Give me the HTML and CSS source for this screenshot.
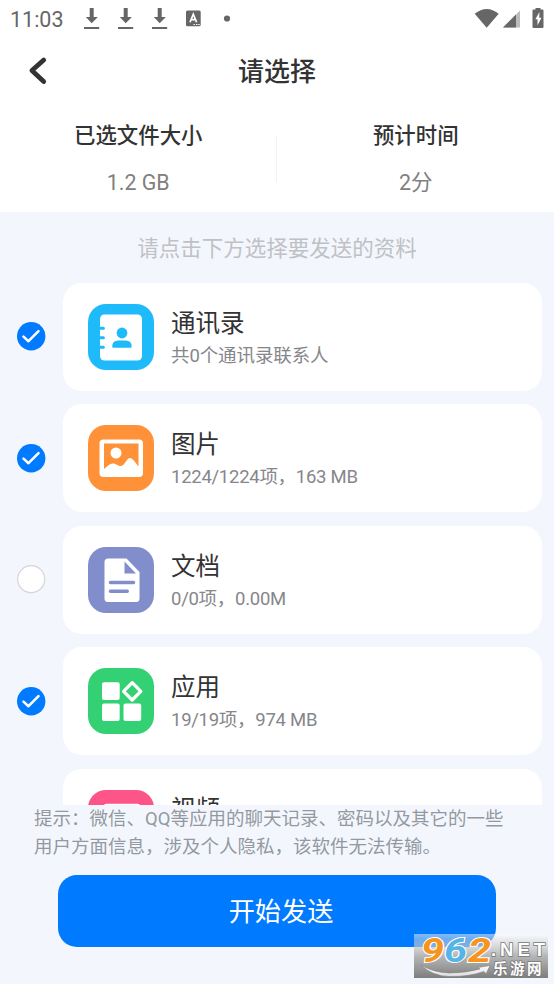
FILE: index.html
```html
<!DOCTYPE html>
<html lang="zh-CN">
<head>
<meta charset="utf-8">
<meta name="viewport" content="width=device-width, initial-scale=1">
<title>请选择</title>
<link rel="stylesheet" href="styles.css">
</head>
<body>
<div class="screen">
  <div class="status">
    <span class="clock">11:03</span>
    <svg class="status-left" width="160" height="38" viewBox="80 0 160 38" fill="#666">
      <g id="dl"><path d="M89.700 8h4v9h4.200L91.700 23.200 85.800 17h3.900z"/><path d="M84 27h15.200v2H84z"/></g>
      <use href="#dl" x="34"/><use href="#dl" x="68"/>
      <rect x="186" y="10.500" width="14.700" height="15.800" rx="1.500"/>
      <path d="M190 22.300l3.300-8 3.300 8M191.300 19.700h4" fill="none" stroke="#fff" stroke-width="1.700"/>
      <path d="M193.500 24h1.400v1h-1.400zM196 24h1.400v1H196zM198.300 24h1.400v1h-1.400z" fill="#fff"/>
      <circle cx="227" cy="18.500" r="3.100"/>
    </svg>
    <svg class="status-right" width="80" height="38" viewBox="474 0 80 38" fill="#666">
      <path d="M474.700 13.700Q486.700 4.200 498.700 13.700L486.700 27.700z"/>
      <path d="M503 27.600L520 10.500v17.100z" fill="#bbb"/><path d="M503 27.600L516 14.500v13.100z"/>
      <path d="M533.500 9.500h2V8h5v1.500h2q1 0 1 1V27q0 1-1 1h-9q-1 0-1-1V10.500q0-1 1-1z"/>
      <path d="M539.500 12l-4.200 7.200h2.200v6l4-7.500h-2.300z" fill="#fff"/>
    </svg>
  </div>
  <header class="header">
    <svg class="back" width="24" height="32" viewBox="0 0 24 32"><path d="M19.700 5L7.900 15.500 19.700 26.500" fill="none" stroke="#333" stroke-width="4.800" stroke-linecap="round" stroke-linejoin="round"/></svg>
    <h1>请选择</h1>
  </header>
  <section class="summary">
    <div class="stat"><b>已选文件大小</b><span>1.2 GB</span></div>
    <i class="divider"></i>
    <div class="stat"><b>预计时间</b><span>2分</span></div>
  </section>
  <main class="panel">
    <p class="hint">请点击下方选择要发送的资料</p>
    <div class="list">
      <div class="row">
        <svg class="check" viewBox="0 0 29 29"><circle cx="14.200" cy="14.200" r="14.200" fill="#007aff"/><path d="M6.500 14.600l5 4.600 10-10" class="tick"/></svg>
        <div class="card">
          <svg class="icon" viewBox="0 0 66 66"><rect width="66" height="66" rx="18" fill="#1fbafa"/><rect x="12" y="10.500" width="42" height="46" rx="4.500" fill="#fff"/><path d="M11 24.200h4.400M11 33.700h4.400M11 43.300h4.400" stroke="#1fbafa" stroke-width="3" stroke-linecap="round"/><circle cx="34" cy="29" r="5.400" fill="#1fbafa"/><path d="M24.200 42.500q0-6 6-6h7.500q6 0 6 6 0 1.200-1.200 1.200H25.400q-1.200 0-1.200-1.200z" fill="#1fbafa"/></svg>
          <div class="text"><h2>通讯录</h2><p class="cjk">共0个通讯录联系人</p></div>
        </div>
      </div>
      <div class="row">
        <svg class="check" viewBox="0 0 29 29"><circle cx="14.200" cy="14.200" r="14.200" fill="#007aff"/><path d="M6.500 14.600l5 4.600 10-10" class="tick"/></svg>
        <div class="card">
          <svg class="icon" viewBox="0 0 66 66"><rect width="66" height="66" rx="18" fill="#ff9138"/><rect x="11.500" y="14.500" width="43.500" height="37.500" rx="4" fill="#fff"/><path d="M16 18.500h34.500V41.500C47 37 44.500 33 42 33c-3.500 0-5 8-9.500 8-3 0-4-2.500-7.500-2.500S19.500 41.500 16 44z" fill="#ff9138"/><circle cx="28" cy="28" r="5.500" fill="#fff"/></svg>
          <div class="text"><h2>图片</h2><p>1224/1224项，163 MB</p></div>
        </div>
      </div>
      <div class="row">
        <svg class="check" viewBox="0 0 29 29"><circle cx="14.200" cy="14.200" r="13.500" fill="#fff" stroke="#d5d5d8" stroke-width="1.200"/></svg>
        <div class="card">
          <svg class="icon" viewBox="0 0 66 66"><rect width="66" height="66" rx="18" fill="#828ecb"/><path d="M20 11.500h18.500L51.500 25v26.500q0 3.500-3.500 3.500H20q-3.500 0-3.500-3.500V15q0-3.500 3.500-3.500z" fill="#fff"/><path d="M36.500 14.500V26.500H48z" fill="#828ecb"/><path d="M22.500 35.500H45.500M22.500 44.200H39.200" stroke="#828ecb" stroke-width="3.600" stroke-linecap="round"/></svg>
          <div class="text"><h2>文档</h2><p>0/0项，0.00M</p></div>
        </div>
      </div>
      <div class="row">
        <svg class="check" viewBox="0 0 29 29"><circle cx="14.200" cy="14.200" r="14.200" fill="#007aff"/><path d="M6.500 14.600l5 4.600 10-10" class="tick"/></svg>
        <div class="card">
          <svg class="icon" viewBox="0 0 66 66"><rect width="66" height="66" rx="18" fill="#34d174"/><g fill="#fff"><rect x="14" y="14.200" width="17.700" height="17.700" rx="2"/><rect x="14" y="35.500" width="17.700" height="17.500" rx="2"/><rect x="35.500" y="35.500" width="17.700" height="17.500" rx="2"/></g><path d="M44.200 14.700L52.800 23.300 44.200 32 35.600 23.300z" fill="none" stroke="#fff" stroke-width="3.300" stroke-linejoin="round"/></svg>
          <div class="text"><h2>应用</h2><p>19/19项，974 MB</p></div>
        </div>
      </div>
      <div class="row">
        <span class="check"></span>
        <div class="card">
          <svg class="icon" viewBox="0 0 66 66"><rect width="66" height="66" rx="18" fill="#fd5588"/><rect x="15" y="13.800" width="38" height="38" rx="4" fill="#fff"/></svg>
          <div class="text"><h2>视频</h2></div>
        </div>
      </div>
    </div>
    <p class="tip">提示：微信、QQ等应用的聊天记录、密码以及其它的一些<br>用户方面信息，涉及个人隐私，该软件无法传输。</p>
    <button class="send">开始发送</button>
  </main>
  <svg class="mark" width="134" height="44" viewBox="0 0 134 44">
    <defs>
      <linearGradient id="shade" x2="0" y2="1"><stop stop-color="#fff" stop-opacity=".5"/><stop offset=".12" stop-color="#ddd" stop-opacity=".5"/><stop offset=".5" stop-color="#aaa" stop-opacity=".85"/><stop offset="1" stop-color="#777" stop-opacity=".95"/></linearGradient>
      <linearGradient id="swoosh" x2="0" y2="1"><stop stop-color="#fff"/><stop offset="1" stop-color="#ddd"/></linearGradient>
    </defs>
    <rect width="134" height="44" fill="url(#shade)"/>
    <g class="digits">
      <text x="7" y="28" textLength="23" lengthAdjust="spacingAndGlyphs" fill="#f7941d">9</text>
      <text x="30" y="28" textLength="23" lengthAdjust="spacingAndGlyphs" fill="#58b4e8">6</text>
      <text x="54" y="28" textLength="23" lengthAdjust="spacingAndGlyphs" fill="#f7941d">2</text>
    </g>
    <path d="M7 31Q18 38 35 39 52 39 66 35L64 33.500 76 31.500 72 40 70 37.500Q54 43 35 42.500 18 42 7 31z" fill="url(#swoosh)" stroke="#777" stroke-width=".5"/>
    <text class="net" x="77" y="22" textLength="54">.NET</text>
    <text class="site" x="79" y="39.500" textLength="48.500">乐游网</text>
  </svg>
</div>
</body>
</html>
```
FILE: styles.css
```css
* { box-sizing: border-box; margin: 0; padding: 0; }
body {
  width: 554px;
  height: 984px;
  overflow: hidden;
  background: #f3f7fd;
  font-family: Roboto, "Noto Sans CJK SC", sans-serif;
  color: #333;
}
svg { display: block; flex: none; }
.screen { position: relative; height: 984px; display: flex; flex-direction: column; }
.status { height: 38px; display: flex; background: #fff; padding-left: 10px; }
.clock { width: 70px; font-size: 21.500px; line-height: 39px; color: #666; }
.status-right { margin-left: auto; }
.header { height: 66px; display: grid; grid-template-columns: 54px 1fr 54px; align-items: center; background: #fff; }
.back { margin-left: 24px; }
h1 { padding-top: 2px; font-size: 26px; font-weight: 500; line-height: 38px; text-align: center; }
.summary { height: 108px; display: flex; background: #fff; padding-top: 16px; }
.stat { flex: 1; display: flex; flex-direction: column; align-items: center; }
.stat b { font-size: 21.400px; font-weight: 500; line-height: 32px; }
.stat span { margin-top: 15px; font-size: 21.400px; line-height: 32px; color: #808080; }
.divider { width: 1px; height: 46px; margin: 16px 1px 0 -1px; background: #f2f2f2; }
.panel { flex: 1; min-height: 0; background: #f3f7fd; }
.hint { height: 70.500px; padding-top: 21px; text-align: center; font-size: 21.500px; line-height: 32px; color: #bfc1c5; }
.list { height: 522.500px; overflow: hidden; display: flex; flex-direction: column; gap: 13.500px; }
.row { flex: none; height: 108px; display: flex; align-items: center; padding: 0 12px 0 17px; }
.check { width: 29px; height: 29px; margin-right: 17px; }
.tick { fill: none; stroke: #fff; stroke-width: 2.600; stroke-linecap: round; stroke-linejoin: round; }
.card { flex: 1; height: 108px; display: flex; padding: 21px 25px; background: #fff; border-radius: 19px; }
.icon { width: 66px; height: 66px; margin-right: 17px; }
.text { padding-top: 2px; }
h2 { font-size: 24.500px; font-weight: 400; line-height: 36px; }
.text p { font-size: 18.500px; line-height: 28px; letter-spacing: -.27px; color: #86868b; white-space: nowrap; }
.text .cjk { letter-spacing: -.1px; }
.tip { height: 70px; padding: 1px 0 0 34px; font-size: 18.500px; line-height: 27.500px; color: #9499a1; white-space: nowrap; }
.send { display: block; width: 438px; height: 72px; margin-left: 58px; padding: 2px 0 0 8px; border: 0; border-radius: 19px; background: #007aff; color: #fff; font: 26.200px/70px Roboto, "Noto Sans CJK SC", sans-serif; }
.mark { position: absolute; left: 414px; top: 934px; }
.digits text { font: italic 700 34px Roboto, sans-serif; stroke: #fff; stroke-width: 2px; paint-order: stroke; }
.net { font: 700 18.500px "Liberation Sans", sans-serif; fill: #fff; stroke: #777; stroke-width: 1.500px; paint-order: stroke; }
.site { font: 700 14.500px "Noto Sans CJK SC", sans-serif; fill: #fff; stroke: #777; stroke-width: 1.500px; paint-order: stroke; }
```
